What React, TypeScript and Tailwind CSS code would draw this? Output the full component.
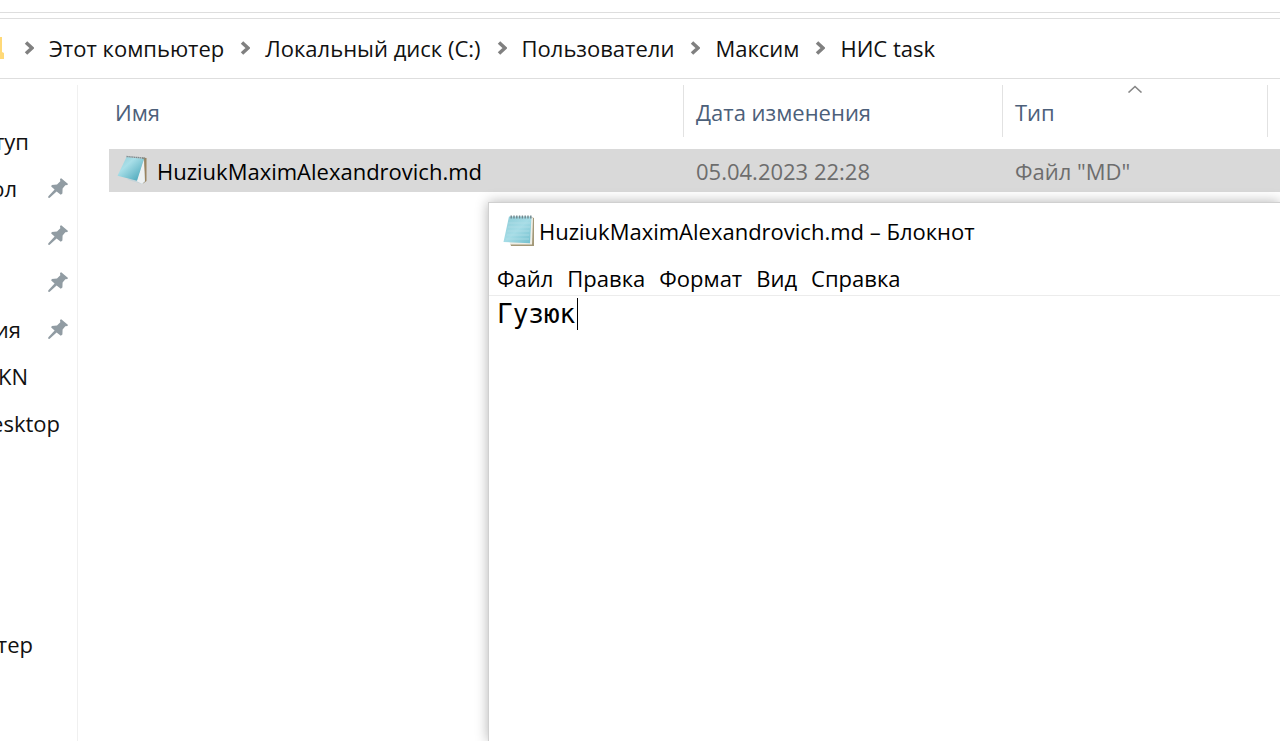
import React from "react";

const crumbs = ["Этот компьютер", "Локальный диск (C:)", "Пользователи", "Максим", "НИС task"];

const places: { label: string; width: string; pinned: boolean }[] = [
  { label: "туп", width: "w-[29px]", pinned: false },
  { label: "ол", width: "w-[17px]", pinned: true },
  { label: "", width: "w-[17px]", pinned: true },
  { label: "", width: "w-[17px]", pinned: true },
  { label: "ия", width: "w-[21px]", pinned: true },
  { label: "KN", width: "w-[28px]", pinned: false },
  { label: "esktop", width: "w-[60px]", pinned: false },
];

const menus = ["Файл", "Правка", "Формат", "Вид", "Справка"];

function Chevron() {
  return (
    <svg className="h-3.5 w-2.5 shrink-0" viewBox="0 0 10 14" fill="none" aria-hidden="true">
      <path d="M2 1.5 8 7l-6 5.5" stroke="#808080" strokeWidth="3.6" />
    </svg>
  );
}

function Pin() {
  return (
    <svg className="h-5 w-5 shrink-0" viewBox="0 0 20 20" fill="#919ca3" aria-hidden="true">
      <path d="M13.2 0.2 19.8 5.8 19.6 7 17.3 7.2 14.6 10.6 14.4 15.6 12.8 16.8 8.6 13.4 1.4 20 0 19.6 0.4 18.2 6.6 11.6 3.2 8.4 3.8 7 9 6.4 12.3 3.2 12 1Z" />
    </svg>
  );
}

function TiltedNotepadIcon() {
  return (
    <svg className="h-8 w-8 shrink-0" viewBox="0 0 32 32" aria-hidden="true">
      <defs>
        <linearGradient id="fileCover" x1="0" y1="0" x2="1" y2="1">
          <stop offset="0" stopColor="#8fcbd6" />
          <stop offset=".35" stopColor="#a9dfe8" />
          <stop offset="1" stopColor="#3d9fb4" />
        </linearGradient>
      </defs>
      <path d="M25 2.5 29.5 3 29.5 26 26 28.5Z" fill="#9a8460" />
      <path d="M26.5 4 28 26.5 25 29 10 24.5 20 22Z" fill="#c5d3d8" />
      <path d="M27 4 27.8 26 25 28.8 19.5 26Z" fill="#eef1f2" />
      <path d="M9.5 2 27 3.8 20 25.8 0.5 20.8Z" fill="url(#fileCover)" />
      <path d="M9.5 1.5 28 3.2" stroke="#7d8a8e" strokeWidth="1.4" strokeDasharray="1.4 .5" />
    </svg>
  );
}

function NotepadIcon() {
  return (
    <svg className="h-8 w-8 shrink-0" viewBox="0 0 32 32" aria-hidden="true">
      <defs>
        <linearGradient id="appCover" x1="0" y1="0" x2="1" y2="1">
          <stop offset="0" stopColor="#8ccbd6" />
          <stop offset=".5" stopColor="#a5dce6" />
          <stop offset="1" stopColor="#72bfce" />
        </linearGradient>
      </defs>
      <path d="M28 2 31 3 31 31 8 31 7 28Z" fill="#a39878" />
      <path d="M28 2 30 3 29 29.5 7 29.5 7 27Z" fill="#efeee6" />
      <path d="M6 1.5 28.5 1.5 27 28.2 0.5 27Z" fill="url(#appCover)" />
      <path d="M5.5 8H27M5 12H27M4.3 16H26.5M3.6 20H26.3M3 24H26" stroke="#b5e0e8" strokeWidth=".7" />
      <path d="M7.5 2H29" stroke="#70868c" strokeWidth="3" strokeDasharray="1.4 1.4" />
    </svg>
  );
}

function HeaderCell({ children, sorted = false }: { children: React.ReactNode; sorted?: boolean }) {
  return (
    <th scope="col" className="p-0 pb-3 text-left font-normal">
      <div className="relative flex h-[52px] items-center border-r border-[#e2e2e2] pt-0.5 pl-3">
        {children}
        {sorted && (
          <svg className="absolute top-0 left-1/2 h-2 w-4 -translate-x-1/2" viewBox="0 0 16 8" fill="none" aria-hidden="true">
            <path d="M1.5 7.5 8 1.5l6.5 6" stroke="#868686" strokeWidth="1.6" />
          </svg>
        )}
      </div>
    </th>
  );
}

export default function App() {
  return (
    <div className="relative flex min-h-screen flex-col overflow-hidden bg-white font-['Open_Sans','Noto_Sans',sans-serif] text-[22px] leading-8 text-[#111]">
      <div className="h-[13px] border-b border-[#dedede]" />
      <nav aria-label="Путь" className="mt-[5px] flex h-[61px] items-center border-y border-[#dedede] pb-0.5">
        <svg className="mr-5 h-6 w-1 shrink-0" viewBox="0 0 4 24" aria-hidden="true">
          <path d="M0 1H2V16L4 17V23H0Z" fill="#ffd978" />
        </svg>
        <ol className="flex items-center gap-4 whitespace-nowrap">
          {crumbs.map((name) => (
            <li key={name} className="flex items-center gap-[15px]">
              <Chevron />
              <a href="#">{name}</a>
            </li>
          ))}
        </ol>
      </nav>

      <div className="flex grow pt-1.5">
        <aside className="flex w-[78px] shrink-0 flex-col overflow-hidden border-r border-[#f0f0f0] pt-8">
          {places.map((place, i) => (
            <a key={i} href="#" className="flex h-[47px] shrink-0 items-center justify-between pr-[9px]">
              <span className={`${place.width} flex shrink-0 justify-end`}>{place.label}</span>
              {place.pinned && <Pin />}
            </a>
          ))}
          <a href="#" className="mt-[174px] flex h-[47px] shrink-0 items-center">
            <span className="flex w-[33px] justify-end">тер</span>
          </a>
        </aside>

        <main className="grow">
          <table className="w-full table-fixed border-collapse">
            <colgroup>
              <col className="w-[31px]" />
              <col className="w-[575px]" />
              <col className="w-[319px]" />
              <col className="w-[265px]" />
              <col />
            </colgroup>
            <thead className="text-[#4c607a]">
              <tr>
                <td />
                <th scope="col" className="p-0 pb-3 text-left font-normal">
                  <div className="flex h-[52px] items-center border-r border-[#e2e2e2] pt-0.5 pl-1.5">Имя</div>
                </th>
                <HeaderCell>Дата изменения</HeaderCell>
                <HeaderCell sorted>Тип</HeaderCell>
                <td />
              </tr>
            </thead>
            <tbody>
              <tr className="h-[43px] text-[#6d6d6d]">
                <td />
                <td className="bg-[#d9d9d9] p-0 pl-2 text-black">
                  <div className="flex items-center gap-2">
                    <TiltedNotepadIcon />
                    HuziukMaximAlexandrovich.md
                  </div>
                </td>
                <td className="bg-[#d9d9d9] p-0 pl-3">05.04.2023 22:28</td>
                <td className="bg-[#d9d9d9] p-0 pl-3">Файл "MD"</td>
                <td className="bg-[#d9d9d9]" />
              </tr>
            </tbody>
          </table>
        </main>
      </div>

      <section
        aria-label="Блокнот"
        className="absolute top-[202px] right-0 bottom-0 left-[488px] flex flex-col border-t border-l border-[#d0d0d0] bg-white shadow-[0_0_12px_rgba(0,0,0,0.3)]"
      >
        <header className="flex h-[58px] shrink-0 items-center gap-1 pb-0.5 pl-3.5 text-black">
          <NotepadIcon />
          <h1>HuziukMaximAlexandrovich.md – Блокнот</h1>
        </header>
        <div className="flex h-[35px] shrink-0 items-center gap-3.5 border-b border-[#ececec] pl-2 text-black">
          {menus.map((name) => (
            <button key={name} type="button">
              {name}
            </button>
          ))}
        </div>
        <div className="relative flex grow">
          <textarea
            aria-label="Текст"
            defaultValue="Гузюк"
            className="grow resize-none pt-0.5 pl-2 font-['DejaVu_Sans_Mono',monospace] text-[26px] leading-8 text-black outline-none"
          />
          <span className="absolute top-0.5 left-[88px] h-8 w-px bg-black" />
        </div>
      </section>
    </div>
  );
}
